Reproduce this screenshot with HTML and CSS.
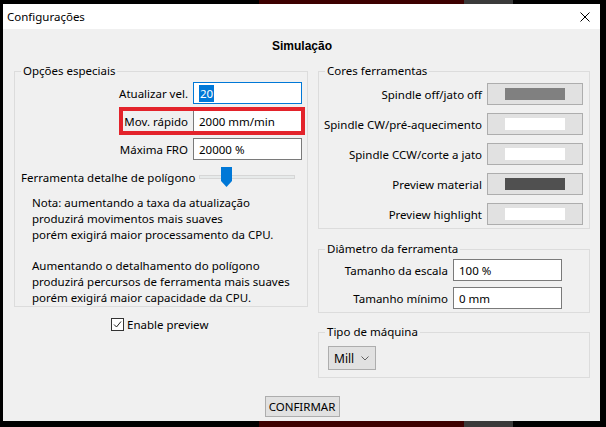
FILE: index.html
```html
<!DOCTYPE html>
<html lang="pt">
<head>
    <meta charset="UTF-8">
    <meta name="viewport" content="width=device-width, initial-scale=1.0">
    <title>Configurações</title>
    <link rel="stylesheet" href="styles.css">
</head>
<body>

<div class="strip strip-top"><span class="strip-dark"></span><span class="strip-red"></span><span class="strip-grey"></span></div>

<div class="window">
    <div class="titlebar">
        <span class="title">Configurações</span>
        <svg class="close" width="10" height="10" viewBox="0 0 10 10">
            <path d="M0.5 0.5 L9.5 9.5 M9.5 0.5 L0.5 9.5" stroke="#000" stroke-width="1" fill="none"/>
        </svg>
    </div>

    <div class="content">
        <h1 class="heading">Simulação</h1>

        <div class="columns">
            <div class="col">
                <fieldset class="group">
                    <legend>Opções especiais</legend>
                    <div class="rows rows-special">
                        <div class="field">
                            <label>Atualizar vel.</label>
                            <div class="textbox focused"><span class="selected">20</span></div>
                        </div>
                        <div class="field">
                            <div class="marked">
                                <label>Mov. rápido</label>
                                <div class="textbox">2000 mm/min</div>
                            </div>
                        </div>
                        <div class="field">
                            <label>Máxima FRO</label>
                            <div class="textbox">20000 %</div>
                        </div>
                    </div>

                    <div class="slider-row">
                        <span>Ferramenta detalhe de polígono</span>
                        <svg class="slider" width="96" height="20" viewBox="0 0 96 20">
                            <rect x="0.5" y="8.5" width="95" height="3" fill="#e7eaea" stroke="#d6d6d6"/>
                            <path d="M22 0 H33 V14 L27.5 20 L22 14 Z" fill="#0078d7"/>
                        </svg>
                    </div>

                    <div class="note">
                        <p>Nota: aumentando a taxa da atualização<br>produzirá movimentos mais suaves<br>porém exigirá maior processamento da CPU.</p>
                        <p>Aumentando o detalhamento do polígono<br>produzirá percursos de ferramenta mais suaves<br>porém exigirá maior capacidade da CPU.</p>
                    </div>
                </fieldset>

                <div class="check-row">
                    <span class="checkbox">
                        <svg width="11" height="11" viewBox="0 0 11 11">
                            <path d="M2 5.5 L4.5 8 L9 2.5" stroke="#222" stroke-width="1" fill="none"/>
                        </svg>
                    </span>
                    <span>Enable preview</span>
                </div>
            </div>

            <div class="col">
                <fieldset class="group">
                    <legend>Cores ferramentas</legend>
                    <div class="rows rows-colors">
                        <div class="field">
                            <label>Spindle off/jato off</label>
                            <div class="color-btn"><span class="swatch swatch-grey"></span></div>
                        </div>
                        <div class="field">
                            <label>Spindle CW/pré-aquecimento</label>
                            <div class="color-btn"><span class="swatch"></span></div>
                        </div>
                        <div class="field">
                            <label>Spindle CCW/corte a jato</label>
                            <div class="color-btn"><span class="swatch"></span></div>
                        </div>
                        <div class="field">
                            <label>Preview material</label>
                            <div class="color-btn"><span class="swatch swatch-dark"></span></div>
                        </div>
                        <div class="field">
                            <label>Preview highlight</label>
                            <div class="color-btn"><span class="swatch"></span></div>
                        </div>
                    </div>
                </fieldset>

                <fieldset class="group group-diameter">
                    <legend>Diâmetro da ferramenta</legend>
                    <div class="rows rows-diameter">
                        <div class="field">
                            <label>Tamanho da escala</label>
                            <div class="textbox">100 %</div>
                        </div>
                        <div class="field">
                            <label>Tamanho mínimo</label>
                            <div class="textbox">0 mm</div>
                        </div>
                    </div>
                </fieldset>

                <fieldset class="group group-machine">
                    <legend>Tipo de máquina</legend>
                    <div class="rows rows-machine">
                        <div class="select">
                            <span>Mill</span>
                            <svg width="8" height="5" viewBox="0 0 8 5">
                                <path d="M0.5 0.5 L4 4 L7.5 0.5" stroke="#606060" stroke-width="1" fill="none"/>
                            </svg>
                        </div>
                    </div>
                </fieldset>
            </div>
        </div>

        <div class="footer">
            <button class="btn">CONFIRMAR</button>
        </div>
    </div>
</div>

<div class="strip strip-bottom"><span class="strip-dark"></span><span class="strip-red"></span><span class="strip-grey"></span></div>

</body>
</html>
```

FILE: styles.css
```css
body {
    margin: 0;
    width: 606px;
    height: 427px;
    overflow: hidden;
    background: #000;
    font-family: "Noto Sans", sans-serif;
    font-size: 11.5px;
    color: #000;
}

/* desktop behind the dialog */
.strip {
    display: flex;
    height: 4px;
}
.strip-bottom {
    height: 6px;
}
.strip-dark {
    width: 259px;
}
.strip-red {
    width: 205px;
    background: #3d0000;
}
.strip-grey {
    width: 49px;
    background: #3a3a3a;
}

.window {
    margin-left: 3px;
    width: 597px;
    height: 417px;
    display: flex;
    flex-direction: column;
    background: #f0f0f0;
}

.titlebar {
    height: 25px;
    flex: none;
    background: #fff;
    display: flex;
    align-items: center;
    justify-content: space-between;
    padding: 0 10px 0 4px;
    font-size: 11.5px;
}

.content {
    flex: 1;
    display: flex;
    flex-direction: column;
    padding: 10px 10px 0 11px;
}

.heading {
    margin: 0;
    font-family: "Liberation Sans", Arial, sans-serif;
    font-size: 12px;
    font-weight: bold;
    line-height: 14px;
    text-align: center;
}

.columns {
    display: grid;
    grid-template-columns: 294px 272px;
    column-gap: 10px;
    margin-top: 10px;
}

.group {
    margin: 0;
    padding: 0;
    min-width: 0;
    border: 1px solid #dcdcdc;
}
.group legend {
    margin-left: 6px;
    padding: 0 2px;
    line-height: 16px;
}

.rows {
    display: flex;
    flex-direction: column;
}
.rows-special {
    gap: 6px;
    padding: 3px 5px 0 0;
}
.rows-colors {
    gap: 8px;
    padding: 4px 6px 3px 0;
}
.rows-diameter {
    gap: 6px;
    padding: 2px 27px 3px 0;
}
.rows-machine {
    padding: 6px 0 7px 9px;
}

.field {
    display: flex;
    justify-content: flex-end;
    align-items: center;
    gap: 5px;
    height: 22px;
}
.field label {
    white-space: nowrap;
}

.marked {
    display: flex;
    align-items: center;
    gap: 5px;
    padding-left: 2px;
    outline: 4px solid #e3232b;
    outline-offset: -1px;
}

.textbox {
    box-sizing: border-box;
    width: 109px;
    height: 22px;
    padding: 0 5px;
    display: flex;
    align-items: center;
    background: #fff;
    border: 1px solid #7a7a7a;
    white-space: nowrap;
}
.textbox.focused {
    border-color: #0078d7;
}
.selected {
    background: #0078d7;
    color: #fff;
    line-height: 17px;
    padding: 0 1px;
}

.slider-row {
    display: flex;
    align-items: center;
    height: 20px;
    margin-top: 7px;
    padding: 0 12px 0 6px;
}
.slider {
    margin-left: auto;
}

.note {
    margin-top: 8px;
    padding-left: 17px;
    line-height: 16px;
}
.note p {
    margin: 0;
}
.note p + p {
    margin-top: 15px;
}

.check-row {
    display: flex;
    align-items: center;
    gap: 3px;
    height: 13px;
    margin-top: 11px;
    padding-left: 97px;
}
.checkbox {
    box-sizing: border-box;
    width: 13px;
    height: 13px;
    display: flex;
    align-items: center;
    justify-content: center;
    background: #fff;
    border: 1px solid #333;
}

.color-btn {
    box-sizing: border-box;
    width: 96px;
    height: 22px;
    display: flex;
    align-items: center;
    justify-content: center;
    background: #e1e1e1;
    border: 1px solid #adadad;
}
.swatch {
    width: 60px;
    height: 12px;
    background: #fff;
}
.swatch-grey {
    background: #808080;
}
.swatch-dark {
    background: #505050;
}

.group-diameter {
    margin-top: 12px;
}
.group-machine {
    margin-top: 11px;
}

.select {
    box-sizing: border-box;
    width: 48px;
    height: 24px;
    display: flex;
    align-items: center;
    justify-content: space-between;
    padding: 0 6px 0 5px;
    background: #e1e1e1;
    border: 1px solid #adadad;
    font-size: 12px;
}

.footer {
    margin-top: auto;
    padding-bottom: 4px;
    display: flex;
    justify-content: center;
}
.btn {
    width: 75px;
    height: 21px;
    padding: 0;
    font-family: "Noto Sans", sans-serif;
    font-size: 11.5px;
    color: #000;
    background: #e1e1e1;
    border: 1px solid #adadad;
    border-radius: 0;
}
```
